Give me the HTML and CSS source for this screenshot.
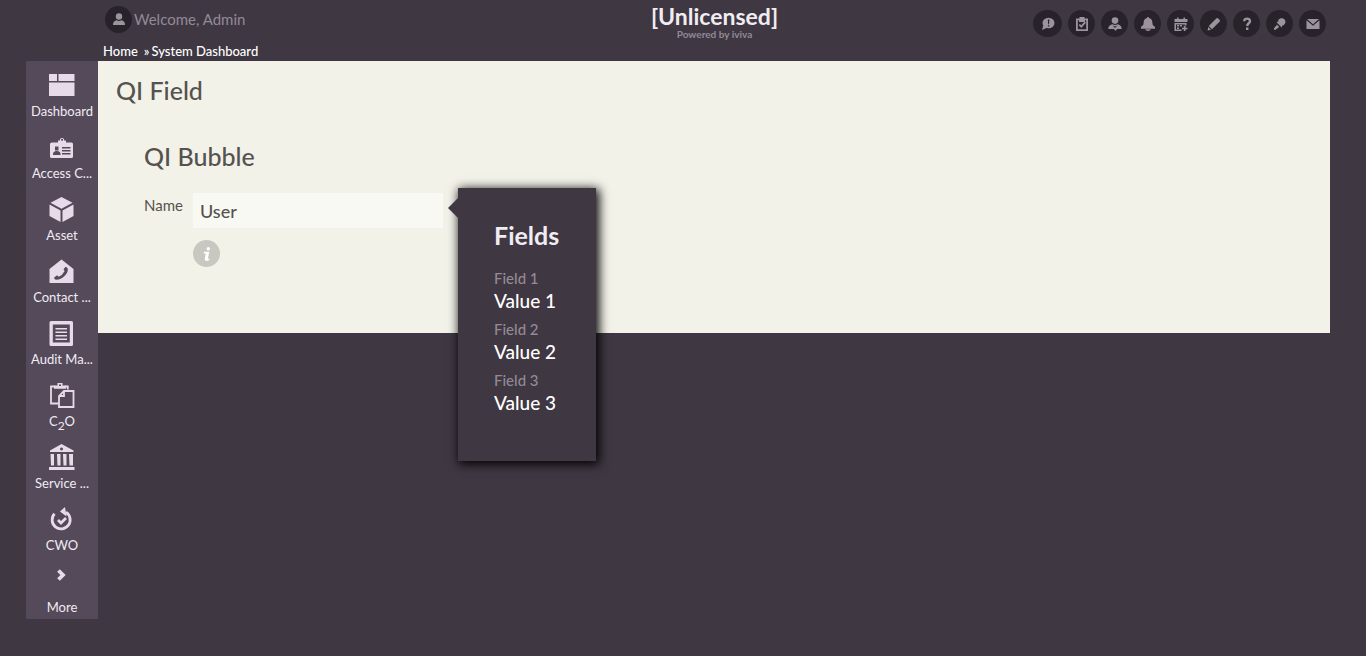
FILE: index.html
```html
<!DOCTYPE html>
<html lang="en">
<head>
<meta charset="utf-8">
<title>System Dashboard</title>
<link rel="stylesheet" href="styles.css">
</head>
<body>
<header class="header">
  <div class="account">
    <a href="#" class="user">
      <span class="round"><svg viewBox="0 0 14 14"><circle cx="7" cy="3.500" r="3.200"/><path d="M1 12c0-3 1.500-4.500 3.500-4.800a5 5 0 0 0 5 0c2 .3 3.500 1.800 3.500 4.800z"/></svg></span>
      <span>Welcome, Admin</span>
    </a>
    <nav class="crumbs"><a href="#">Home</a><span class="sep">»</span><a href="#">System Dashboard</a></nav>
  </div>
  <div class="brand">
    <div class="brand-name">[Unlicensed]</div>
    <div class="brand-by">Powered by iviva</div>
  </div>
  <div class="tools">
    <button class="round wide" aria-label="Messages"><svg viewBox="0 0 14 14"><ellipse cx="7.500" cy="6" rx="6" ry="5.200"/><path d="M2.500 8 1 13l5.500-2.500z"/><path class="cut" d="M6.800 2.500h1.600L8 7.200h-.8zM6.900 8.200h1.400v1.300H6.900z"/></svg></button>
    <button class="round" aria-label="Tasks"><svg viewBox="0 0 14 14"><path fill-rule="evenodd" d="M1 1.500h3.500V0h5v1.500H13V14H1zm1.800 1.800v8.900h8.400V3.300H10V5H4V3.300z"/><path class="line" d="m4.300 7.500 2 2.200 4-4.500"/></svg></button>
    <button class="round" aria-label="People"><svg viewBox="0 0 14 14"><circle cx="7" cy="3.600" r="3.300"/><path d="M.3 12c0-3 2-4.500 4.200-4.800a5 5 0 0 0 5 0c2.200.3 4.200 1.800 4.200 4.800H9l-1.500 2L6 12z"/><path class="cut" d="m4.500 8.500 2.500 2.500 2.500-2.500-2.500 1z"/></svg></button>
    <button class="round" aria-label="Alerts"><svg viewBox="0 0 14 14"><path d="M6 1a1 1 0 0 1 2 0c2.500.6 3.400 2.500 3.400 5 0 2 .8 3 2.600 3.700V11.800H0V9.700C1.800 9 2.600 8 2.600 6c0-2.500.9-4.400 3.400-5zM4.200 12.300h5.600c-.5 2.200-5.100 2.200-5.600 0z"/></svg></button>
    <button class="round" aria-label="Calendar"><svg viewBox="0 0 14 14"><path fill-rule="evenodd" d="M.5 2H3V.5h1.500V2h5V.5H11V2h2.500v3H.5zM.5 6h12v2.500H11V7.500H2v5h5.500V14h-7zM3 8h2v1.500H3zm3 0h2v1.500H6zm-3 2.500h2V12H3z"/><path d="M9.800 8.800h1.700v1.900h2v1.600h-2V14H9.800v-1.700H8v-1.600h1.800z"/></svg></button>
    <button class="round" aria-label="Edit"><svg viewBox="0 0 14 14"><path d="M1.800 9 9.500 1.300a1 1 0 0 1 1.400 0l1.800 1.800a1 1 0 0 1 0 1.400L5 12.200zM1.200 10l2.800 2.800-3.400.6z"/></svg></button>
    <button class="round" aria-label="Help"><svg viewBox="0 0 14 14"><path class="thick" d="M4.200 4.300C4.200.7 10 .8 10 4.200 10 6.300 7.200 6.200 7.200 9"/><path d="M6 10.500h2.400V13H6z"/></svg></button>
    <button class="round" aria-label="Pin"><svg viewBox="0 0 14 14"><path d="M5.300 3C7 .5 10 .8 11.300 2.300c1.600 1.500 1.700 4.300-.8 6l-1.200.2-.6 2L3.500 5.300l1.800-.8zM4 7.700l2.200 2.200-3.700 2.900H1v-1.500z"/></svg></button>
    <button class="round" aria-label="Mail"><svg viewBox="0 0 14 14"><path d="M1 2h12L7 7.300zM.5 3.200 7 8.800l6.500-5.600V12H.5z"/></svg></button>
  </div>
</header>
<div class="layout">
  <nav class="sidebar">
    <a href="#"><svg viewBox="0 0 26 26"><path d="M0 2h8v7H0zM9.500 2h16v7h-16zM0 10.500h25.500V24H0z"/></svg><span>Dashboard</span></a>
    <a href="#"><svg viewBox="0 0 26 26"><path fill-rule="evenodd" d="M3 8.500h6V6.500h2V5a2.500 2.500 0 0 1 4 0v1.500h2v2h5.500Q24 8.500 24 10v12.500q0 1.500-1.500 1.500h-20Q1 24 1 22.500V10Q1 8.500 3 8.500zM13 4.700a1 1 0 1 0 .1 0z"/><path class="side-cut" d="M6 12.500h3.500v4H6zM4 21c0-3 1-4 3.800-4s3.800 1 3.800 4zM13 13h8.500v1.500H13zM13 16h8.500v1.500H13zM13 19h8.500v1.500H13z"/></svg><span>Access C...</span></a>
    <a href="#"><svg viewBox="0 0 26 26"><path d="m12.500 1 11 5.800-11 6-11-6zM.500 8.500l11 6V26l-11-6zM24.500 8.500l-11 6V26l11-6z"/></svg><span>Asset</span></a>
    <a href="#"><svg viewBox="0 0 26 26"><path d="M12.500 1.500 24.500 11v14H.5V11z"/><path class="side-cut" d="M15.500 10q1-2 3 0 1.300 3.500-2.500 7.500-4.500 4.500-9 4.300-2.700-.8-1.500-2.500l2.200-1.800q1.200 0 2 1.300 3.800-1.500 6-5.800l-1.200-1.500z"/></svg><span>Contact ...</span></a>
    <a href="#"><svg viewBox="0 0 26 26"><path fill-rule="evenodd" d="M2 1h20.500Q24 1 24 2.500v22q0 1.500-1.500 1.500H2Q.5 26 .5 24.500v-22Q.5 1 2 1zM3.800 4.500v18h17v-18z"/><path d="M6.500 8h11.500v1.500H6.500zM6.500 11.500h11.500v1.500H6.500zM6.500 15h11.500v1.500H6.500zM6.500 18.500h11.500V20H6.500z"/></svg><span>Audit Ma...</span></a>
    <a href="#"><svg viewBox="0 0 26 26"><path class="outline" d="M9.500 21.500H2v-17h4M16 4.500h2.800v3"/><path fill-rule="evenodd" d="M5 3.500h3.500V1h5v2.500H17v3.200H5zm5-1v1.500h2V2.500z"/><path class="outline" d="M15 9h9.500v16H10V14zM15 9v5h-5"/></svg><span>C<sub>2</sub>O</span></a>
    <a href="#"><svg viewBox="0 0 26 26"><path fill-rule="evenodd" d="M12.500 0 24.500 6.500V8H1V6.500zM12.500 3.500a1.500 1.500 0 1 0 .1 0z"/><path d="M1.500 10H5v11.500H2zM8 10h3.500v11.500H8.500zM14 10h3.500v11.500h-3zM20 10h4v11.500h-3.500zM0 23h25.500v3H0z"/></svg><span>Service ...</span></a>
    <a href="#"><svg viewBox="0 0 26 26"><path class="ring" d="M5.500 7.800a9 9 0 1 0 11.500-1.500"/><path d="m16 1-5 4.500 6.500 5z"/><path class="tick" d="m9 14 3 3 5-5"/></svg><span>CWO</span></a>
    <a href="#"><svg viewBox="0 0 26 26"><path class="chevron" d="m9.500 2.500 4.500 4.500-4.500 4.500"/></svg><span>More</span></a>
  </nav>
  <main class="page">
    <h1>QI Field</h1>
    <section class="group">
      <h2>QI Bubble</h2>
      <div class="row">
        <label for="name">Name</label>
        <div class="control">
          <input id="name" type="text" value="User">
          <button class="info" aria-label="Info"><svg viewBox="0 0 14 14"><circle cx="8.300" cy="1.700" r="1.700"/><path d="M4 4.800h5.300L7.800 11.800l1.500-.3-.3 1.700c-2 1.300-4.500 1-4.200-1.200L5.700 6.600H3.800z"/></svg></button>
          <aside class="bubble">
            <h3>Fields</h3>
            <dl>
              <dt>Field 1</dt><dd>Value 1</dd>
              <dt>Field 2</dt><dd>Value 2</dd>
              <dt>Field 3</dt><dd>Value 3</dd>
            </dl>
          </aside>
        </div>
      </div>
    </section>
  </main>
</div>
</body>
</html>
```
FILE: styles.css
```css
* { box-sizing: border-box; }
body { margin: 0; background: #3f3742; color: #fff; font-family: Lato, "Liberation Sans", sans-serif; }
a { color: inherit; text-decoration: none; }
button { border: 0; padding: 0; cursor: pointer; }
h1, h2, h3, dl, dd { margin: 0; }

.header { display: grid; grid-template-columns: 1fr auto 1fr; height: 61px; padding: 0 40px 0 103px; }
.account { display: flex; flex-direction: column; gap: 9px; padding-top: 6px; }
.user { display: flex; align-items: center; gap: 2px; padding-left: 2px; color: #938a97; font-size: 15px; line-height: 27px; }
.crumbs { display: flex; font-size: 13px; line-height: 18px; font-weight: 500; white-space: nowrap; }
.sep { padding: 0 2px 0 6px; }
.round { display: flex; align-items: center; justify-content: center; width: 27px; height: 27px; border-radius: 50%; background: #28232b; flex: none; }
.round svg { width: 14px; height: 14px; fill: #9c939f; }
.round .cut { fill: #28232b; }
.round .line { fill: none; stroke: #9c939f; stroke-width: 1.800; }
.round .thick { fill: none; stroke: #9c939f; stroke-width: 2.400; }
.brand { padding-top: 4px; text-align: center; }
.brand-name { font-size: 23px; line-height: 24px; font-weight: 700; color: #f0ecf2; }
.brand-by { font-size: 10px; line-height: 12px; font-weight: 700; color: #938a97; }
.tools { display: flex; justify-content: flex-end; gap: 6px; padding-top: 10px; }
.wide { width: 29px; }

.layout { display: flex; align-items: flex-start; padding: 0 36px 37px 26px; }
.sidebar { width: 72px; flex: none; background: #544a5a; }
.sidebar a { display: flex; flex-direction: column; align-items: center; gap: 4px; height: 62px; padding-top: 11px; color: #f2eaf4; font-size: 13px; line-height: 18px; white-space: nowrap; }
.sidebar svg { width: 26px; height: 26px; fill: #e8dbe9; }
.sidebar sub { font-size: 12px; line-height: 1px; }
.sidebar .side-cut { fill: #544a5a; }
.sidebar .outline { fill: none; stroke: #e8dbe9; stroke-width: 1.800; }
.sidebar .ring, .sidebar .tick { fill: none; stroke: #e8dbe9; stroke-width: 2.800; }
.sidebar .chevron { fill: none; stroke: #e8dbe9; stroke-width: 3.800; }

.page { flex: 1; min-width: 0; min-height: 272px; padding: 13px 18px; background: #f2f2e9; color: #55524f; }
h1, h2 { font-size: 25px; line-height: 32px; font-weight: 500; }
.group { padding: 34px 28px 0; }
.row { display: flex; align-items: flex-start; gap: 10px; padding-top: 21px; }
.row label { width: 39px; font-size: 15px; line-height: 25px; }
.control { position: relative; width: 250px; }
.control input { display: block; width: 100%; height: 35px; border: 0; padding: 0 7px; background: #f8f9f2; color: #55524f; font: 500 18px Lato, "Liberation Sans", sans-serif; }
.info { display: flex; align-items: center; justify-content: center; width: 27px; height: 27px; margin-top: 12px; border-radius: 50%; background: #c9c8c0; }
.info svg { width: 14px; height: 14px; fill: #fff; }
.bubble { position: absolute; left: 265px; top: -5px; width: 138px; padding: 31px 20px 46px 36px; background: #3f3742; color: #f0ecf2; box-shadow: 2px 2px 10px 1px #000; }
.bubble::before { content: ""; position: absolute; left: -10px; top: 10px; border: 10px solid transparent; border-left: 0; border-right-color: #3f3742; }
.bubble h3 { font-size: 25px; line-height: 32px; font-weight: 700; }
.bubble dl { padding-top: 17px; }
.bubble dt { font-size: 15px; line-height: 20px; font-weight: 500; color: #938a97; }
.bubble dd { padding-bottom: 6px; font-size: 19px; line-height: 25px; font-weight: 500; color: #fff; }
.bubble dd:last-child { padding-bottom: 0; }
```
